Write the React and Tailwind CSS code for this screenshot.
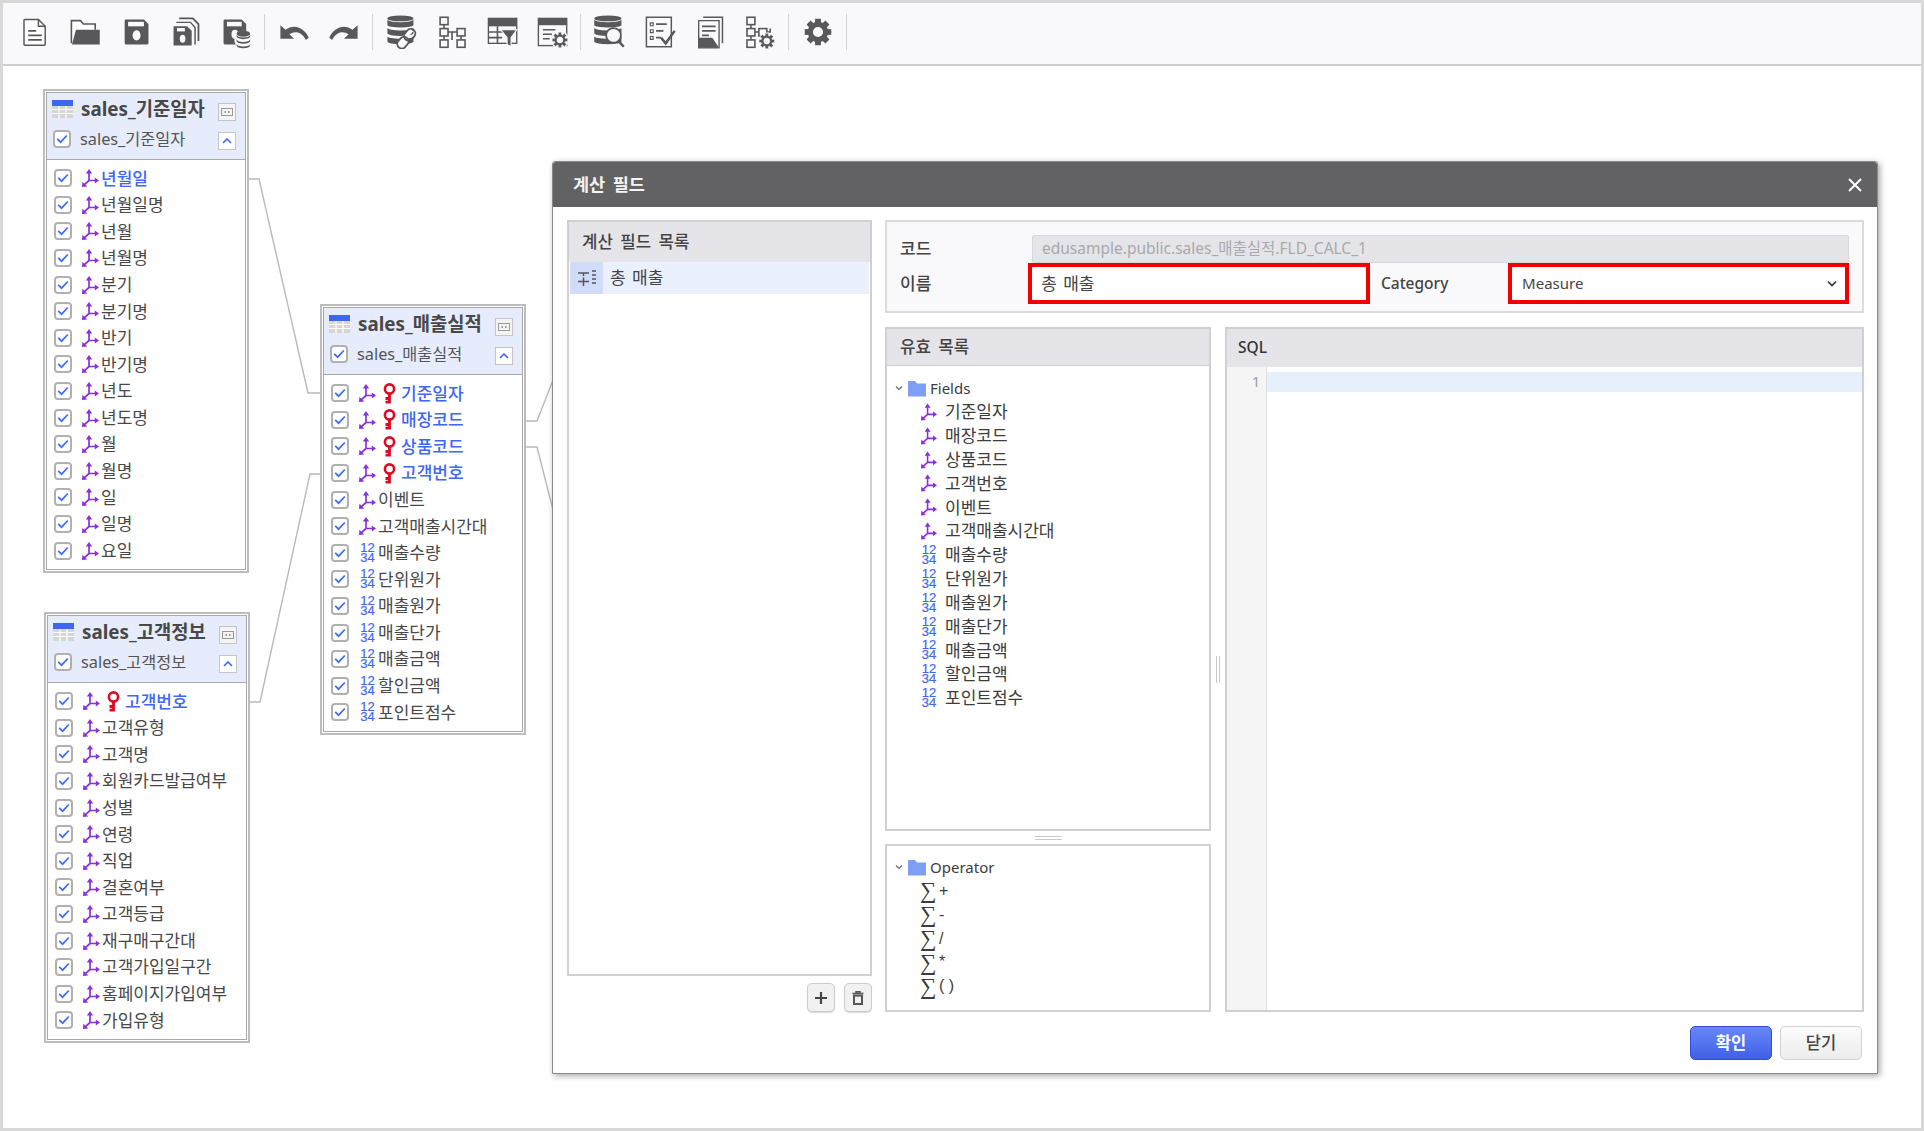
import React from "react";

const FONT = { fontFamily: '"Noto Sans","Noto Sans CJK KR",sans-serif' };

function gearPath(cx, cy, ro, ri, hole, n = 8) {
  let d = "";
  const step = (Math.PI * 2) / n;
  for (let i = 0; i < n; i++) {
    const a = i * step - Math.PI / 2;
    const pts = [
      [a - step * 0.27, ro],
      [a + step * 0.27, ro],
      [a + step * 0.38, ri],
      [a + step * 0.62, ri],
    ];
    pts.forEach(([t, r], j) => {
      d += (i === 0 && j === 0 ? "M" : "L") + (cx + r * Math.cos(t)).toFixed(2) + " " + (cy + r * Math.sin(t)).toFixed(2) + " ";
    });
  }
  d += "Z M" + (cx + hole) + " " + cy + " A" + hole + " " + hole + " 0 1 0 " + (cx - hole) + " " + cy + " A" + hole + " " + hole + " 0 1 0 " + (cx + hole) + " " + cy + " Z";
  return d;
}

const C = "#58585a";

function Ico({ children }) {
  return (
    <svg width="34" height="34" viewBox="0 0 30 30" fill="none">
      {children}
    </svg>
  );
}
const Gear = ({ x, y, r = 6 }) => (
  <path d={gearPath(x, y, r, r * 0.72, r * 0.38)} fill={C} fillRule="evenodd" stroke="#f9f9fb" strokeWidth="0.5" />
);
const Floppy = ({ x = 7, w = 17 }) => (
  <>
    <path d={`M${x + 1} 4 H${x + w - 4} L${x + w} 8 V25 a1 1 0 0 1 -1 1 H${x + 1} a1 1 0 0 1 -1 -1 V5 a1 1 0 0 1 1 -1 Z`} fill={C} />
    <rect x={x + 3} y="6" width={w - 7} height="4" fill="#f9f9fb" />
  </>
);
const Db = ({ x, y, w, h, bands = 3 }) => {
  const s = h / bands;
  return (
    <>
      {Array.from({ length: bands }).map((_, i) => (
        <path
          key={i}
          d={`M${x} ${y + i * s + 2} a${w / 2} 2.4 0 0 0 ${w} 0 v${s - 2.6} a${w / 2} 2.4 0 0 1 -${w} 0 Z`}
          fill={C}
        />
      ))}
      <ellipse cx={x + w / 2} cy={y + 1} rx={w / 2} ry="2.6" fill={C} />
    </>
  );
};

const UNDO = "M3 9 V21 H15 L11 17 C16 13.5 22 15 25.5 22 L28 20 C24 11 15 7.5 7.5 13 Z";

const toolbar = [
  <Ico>
    <path d="M6 4 H18 L24 10 V26 a.7.7 0 0 1 -.7 .7 H6 a.7.7 0 0 1 -.7 -.7 V4.7 a.7.7 0 0 1 .7 -.7 Z" stroke={C} strokeWidth="1.3" fill="#fff" />
    <path d="M18 4 V10 H24" stroke={C} strokeWidth="1.3" />
    <path d="M9 14 H16 M9 18 H21 M9 22 H21" stroke={C} strokeWidth="1.6" />
  </Ico>,
  <Ico>
    <path d="M3 25 V5 H11 L13.5 8 H24 V13" stroke={C} strokeWidth="1.4" fill="#fff" />
    <path d="M3.5 26 L7 13 H28 V26 Z" fill={C} />
  </Ico>,
  <Ico>
    <Floppy x={5} w={21} />
    <ellipse cx="15.5" cy="18" rx="3.5" ry="4.5" fill="#f9f9fb" />
  </Ico>,
  <Ico>
    <path d="M9 3 H21 L26 8 V23" stroke={C} strokeWidth="1.6" fill="none" />
    <path d="M6.5 6.5 H19 L23 11 V26" stroke={C} strokeWidth="1.3" fill="none" />
    <path d="M4 10 H16 L20 14 V27 H4 Z" fill={C} />
    <rect x="7" y="11.5" width="7" height="3" fill="#f9f9fb" />
    <ellipse cx="12" cy="21" rx="2.5" ry="3.5" fill="#f9f9fb" />
  </Ico>,
  <Ico>
    <Floppy x={4} w={20} />
    <ellipse cx="14" cy="17" rx="3" ry="4" fill="#f9f9fb" />
    <circle cx="21.5" cy="22" r="8" fill="#f9f9fb" />
    <Db x={15.5} y={15.5} w={12} h={12} />
  </Ico>,
  <Ico>
    <path d={UNDO} fill={C} />
  </Ico>,
  <Ico>
    <path d={UNDO} fill={C} transform="translate(30 0) scale(-1 1)" />
  </Ico>,
  <Ico>
    <Db x={3} y={2} w={23} h={22} bands={3} />
    <g stroke="#f9f9fb" strokeWidth="4.5" fill="none"><path d="M15 24 L24 13" /></g>
    <rect x="13" y="19" width="8" height="11" rx="4" transform="rotate(40 17 24)" stroke={C} strokeWidth="1.6" fill="#f9f9fb" />
    <rect x="19" y="12" width="8" height="11" rx="4" transform="rotate(40 23 17)" stroke={C} strokeWidth="1.6" fill="none" />
  </Ico>,
  <Ico>
    <g stroke={C} strokeWidth="1.4" fill="#f9f9fb">
      <path d="M8 8 V22 M8 15 H23 M15 15 V22 M23 15 V22" fill="none" />
      <rect x="4.5" y="2" width="7" height="6.5" />
      <rect x="4.5" y="12" width="7" height="6.5" />
      <rect x="19.5" y="12" width="7" height="6.5" />
      <rect x="4.5" y="22" width="7" height="6.5" />
      <rect x="19.5" y="22" width="7" height="6.5" />
    </g>
  </Ico>,
  <Ico>
    <rect x="3" y="3" width="25" height="22" fill="#f9f9fb" stroke={C} strokeWidth="1.2" />
    <rect x="3" y="3" width="25" height="7" fill={C} />
    <path d="M3 15 H19 M3 20 H15 M11 10 V25" stroke={C} strokeWidth="1.4" />
    <path d="M14 13 H28 L23 20 V28 L19.5 26 V20 Z" fill={C} stroke="#f9f9fb" strokeWidth="1" />
  </Ico>,
  <Ico>
    <rect x="3" y="3" width="25" height="24" fill="#f9f9fb" stroke={C} strokeWidth="1.2" />
    <rect x="3" y="3" width="25" height="6" fill={C} />
    <path d="M7 13 H18 M7 17 H15 M7 21 H13" stroke={C} strokeWidth="1.4" />
    <circle cx="22" cy="22" r="8" fill="#f9f9fb" />
    <Gear x={22} y={22} r={7} />
  </Ico>,
  <Ico>
    <Db x={2} y={2} w={24} h={22} />
    <circle cx="19" cy="18" r="6.5" fill="#f9f9fb" stroke={C} strokeWidth="1.6" />
    <path d="M23.5 23 L28 28" stroke={C} strokeWidth="2.2" />
  </Ico>,
  <Ico>
    <rect x="3" y="2" width="22" height="26" fill="#f9f9fb" stroke={C} strokeWidth="1.3" />
    <path d="M6.5 7 H9 V9.5 H6.5 Z M6.5 13 H9 V15.5 H6.5 Z M6.5 19 H9 V21.5 H6.5 Z" stroke={C} strokeWidth="1" />
    <path d="M11.5 8 H21 M11.5 14 H18 M11.5 20 H16" stroke={C} strokeWidth="1.5" />
    <path d="M16 20 L20 25 L28 14" stroke={C} strokeWidth="2.2" fill="none" />
  </Ico>,
  <Ico>
    <path d="M9 2 H26 V25" stroke={C} strokeWidth="1.3" fill="none" />
    <path d="M5 5 H23 V29 H5 Z" fill="#f9f9fb" stroke={C} strokeWidth="1.2" />
    <path d="M8 10 H20 M8 14 H20 M8 18 H14" stroke={C} strokeWidth="1.4" />
    <path d="M5 20 H17 L23 29 H5 Z" fill={C} />
  </Ico>,
  <Ico>
    <g stroke={C} strokeWidth="1.4" fill="#f9f9fb">
      <path d="M7 8 V22 M7 15 H24 V12" fill="none" />
      <rect x="3.5" y="2" width="7" height="6.5" />
      <rect x="3.5" y="12" width="7" height="6.5" />
      <rect x="14" y="12" width="7" height="6.5" />
      <rect x="3.5" y="22" width="7" height="6.5" />
    </g>
    <circle cx="21" cy="23" r="7.5" fill="#f9f9fb" />
    <Gear x={21} y={23} r={7} />
  </Ico>,
  <Ico>
    <path d={gearPath(15, 15, 12, 9, 4.5)} fill={C} fillRule="evenodd" />
  </Ico>,
];

const Sep = () => <div className="w-px h-[36px] bg-[#d4d4d6] mx-[3px]" />;

function Toolbar() {
  const groups = [
    [0, 5],
    [5, 7],
    [7, 11],
    [11, 15],
    [15, 16],
  ];
  return (
    <div className="flex items-center h-[63px] bg-[#f9f9fb] border-b-2 border-[#cfcfcf] pl-[7px] pb-[4px] shrink-0">
      {groups.map(([a, b], i) => (
        <React.Fragment key={i}>
          {toolbar.slice(a, b).map((ic, j) => (
            <div key={j} className="w-[50.3px] h-[36px] flex items-center justify-center">
              {ic}
            </div>
          ))}
          <Sep />
        </React.Fragment>
      ))}
    </div>
  );
}

const Dim = ({ className = "" }) => (
  <svg width="17" height="18" viewBox="0 0 17 18" fill="none" className={className}>
    <path d="M7 3 V11.5 H13.5 M7 11.5 L2.2 15.8" stroke="#8a2fe0" strokeWidth="1.7" />
    <path d="M7 0 L10.2 4.4 H3.8 Z M17 11.5 L12.8 8.4 V14.6 Z M0 18 L0.4 12.8 L5.2 17.4 Z" fill="#8a2fe0" />
  </svg>
);
const Num = () => (
  <span
    className="block w-[16px] text-center text-[#3f66f5] text-[13px] leading-[10px] whitespace-pre [-webkit-text-stroke:0.2px_#3f66f5]"
    style={{ fontFamily: '"Liberation Sans",sans-serif' }}
  >
    {"12\n34"}
  </span>
);
const Key = () => (
  <svg width="13" height="21" viewBox="0 0 13 21" fill="none" className="shrink-0">
    <circle cx="6.5" cy="6" r="4.6" stroke="#dc0a24" strokeWidth="2.6" />
    <path d="M6.5 10 V20.5 M6.5 15.5 H2.5 M6.5 19.2 H2.5" stroke="#dc0a24" strokeWidth="2.8" />
  </svg>
);
const Check = () => (
  <span className="w-[18px] h-[18px] shrink-0 rounded-[4px] border-2 border-[#b0b0b0] bg-white flex items-center justify-center">
    <svg width="12" height="10" viewBox="0 0 12 10" fill="none">
      <path d="M1.2 4.8 L4.6 8.2 L10.8 1.5" stroke="#3f6cf2" strokeWidth="1.7" />
    </svg>
  </span>
);
const TableIcon = () => (
  <svg width="21" height="18" viewBox="0 0 21 18" className="shrink-0">
    <rect x="0" y="0" width="21" height="18" fill="#d6d6d6" />
    <rect x="0" y="0" width="21" height="6" fill="#3f66f0" />
    <path d="M0 9.5 H21 M0 13.5 H21 M7 6 V18 M14 6 V18" stroke="#fff" strokeWidth="1.2" />
  </svg>
);

function Row({ label, keyed, num, blue }) {
  return (
    <div className="flex items-center h-[26.6px] pl-[6px] text-[17px] text-[#484848] whitespace-nowrap">
      <Check />
      <span className="ml-[10px] w-[17px] flex justify-center shrink-0">{num ? <Num /> : <Dim />}</span>
      {keyed ? (
        <>
          <span className="ml-[7px] mr-[3px]">
            <Key />
          </span>
          <span className="ml-[2px] text-[#3f66f5] font-medium">{label}</span>
        </>
      ) : (
        <span className={blue ? "ml-[2px] text-[#3f66f5] font-medium" : "ml-[2px]"}>{label}</span>
      )}
    </div>
  );
}

function Card({ name, rows, className }) {
  return (
    <div className={`absolute w-[206px] bg-white border-2 border-[#bdbdbd] p-[1px] ${className}`}>
      <div className="border border-[#a9a9a9]">
        <div className="h-[67px] bg-[#e6ecfb] border-b border-[#a9a9a9] pl-[5px] pr-[9px] pt-[4px]">
          <div className="flex items-center h-[24px]">
            <TableIcon />
            <span className="ml-[8px] flex-1 font-bold text-[18.8px] text-[#484848] whitespace-nowrap">{name}</span>
            <span className="mt-[5px] w-[18px] h-[18px] border border-[#c4c4c4] bg-[#f4f4f4] flex items-center justify-center">
              <svg width="12" height="8" viewBox="0 0 12 8" fill="none">
                <rect x="0.5" y="0.5" width="11" height="7" stroke="#999" />
                <path d="M3.5 4 H5 M7 4 H8.5" stroke="#777" strokeWidth="1.4" />
              </svg>
            </span>
          </div>
          <div className="flex items-center h-[24px] mt-[6px] text-[16.3px] text-[#555]">
            <span className="ml-[1px]">
              <Check />
            </span>
            <span className="ml-[9px] flex-1 whitespace-nowrap">{name}</span>
            <span className="mt-[4px] w-[18px] h-[18px] border border-[#c4c4c4] bg-white flex items-center justify-center">
              <svg width="10" height="6" viewBox="0 0 10 6" fill="none">
                <path d="M1 5 L5 1 L9 5" stroke="#3f66f5" strokeWidth="1.6" />
              </svg>
            </span>
          </div>
        </div>
        <div className="pt-[5px] pb-[5px] pl-[1px]">
          {rows.map((r) => (
            <Row key={r.label} {...r} />
          ))}
        </div>
      </div>
    </div>
  );
}

const d = (arr) => arr.map((label) => ({ label }));
const n = (arr) => arr.map((label) => ({ label, num: true }));
const k = (arr) => arr.map((label) => ({ label, keyed: true }));

const rows1 = [
  { label: "년월일", blue: true },
  ...d(["년월일명", "년월", "년월명", "분기", "분기명", "반기", "반기명", "년도", "년도명", "월", "월명", "일", "일명", "요일"]),
];
const salesRows = [
  ...k(["기준일자", "매장코드", "상품코드", "고객번호"]),
  ...d(["이벤트", "고객매출시간대"]),
  ...n(["매출수량", "단위원가", "매출원가", "매출단가", "매출금액", "할인금액", "포인트점수"]),
];
const customerRows = [
  ...k(["고객번호"]),
  ...d(["고객유형", "고객명", "회원카드발급여부", "성별", "연령", "직업", "결혼여부", "고객등급", "재구매구간대", "고객가입일구간", "홈페이지가입여부", "가입유형"]),
];

const Folder = () => (
  <svg width="18" height="17" viewBox="0 0 18 17" className="shrink-0">
    <path d="M0 1 H7 L9 3.5 H18 V16.5 H0 Z" fill="#7f9ff5" />
  </svg>
);
const Chevron = () => (
  <svg width="8" height="6" viewBox="0 0 8 6" fill="none" className="shrink-0">
    <path d="M1 1.5 L4 4.5 L7 1.5" stroke="#666" strokeWidth="1.2" />
  </svg>
);

function TreeHead({ label }) {
  return (
    <div className="flex items-center h-[24px] text-[15px] text-[#3c3c3c]">
      <Chevron />
      <span className="ml-[5px]">
        <Folder />
      </span>
      <span className="ml-[4px]">{label}</span>
    </div>
  );
}

function FieldItem({ label, num }) {
  return (
    <div className="flex items-center h-[23.85px] pl-[26px] text-[17px] text-[#3c3c3c]">
      <span className="w-[16px] flex justify-center shrink-0">{num ? <Num /> : <Dim />}</span>
      <span className="ml-[8px]">{label}</span>
    </div>
  );
}

function Dialog() {
  return (
    <div className="absolute left-[549px] top-[95px] w-[1326px] h-[913px] bg-white border border-[#8a8a8a] rounded-t-[3px] shadow-[2px_2px_6px_rgba(0,0,0,0.35)] flex flex-col">
      <div className="h-[45px] shrink-0 bg-[#626264] flex items-center justify-between pl-[20px] pr-[14px] rounded-t-[3px]">
        <span className="text-[17.5px] font-bold text-[#f4f4f4] [word-spacing:3px]">계산 필드</span>
        <svg width="16" height="16" viewBox="0 0 16 16" fill="none">
          <path d="M2 2 L14 14 M14 2 L2 14" stroke="#fff" strokeWidth="1.9" />
        </svg>
      </div>
      <div className="flex-1 flex gap-[13px] pt-[13px] pl-[14px] pr-[13px] min-h-0">
        <div className="w-[305px] shrink-0 flex flex-col">
          <div className="h-[756px] border-2 border-[#d0d0d0] bg-white flex flex-col">
            <div className="h-[40px] bg-[#e5e5e9] flex items-center pl-[13px] text-[16.8px] font-medium text-[#444] [word-spacing:3px]">
              계산 필드 목록
            </div>
            <div className="h-[32px] flex items-center bg-[#eaf0fd] text-[17px] text-[#444] mx-[1px]">
              <span className="w-[33px] h-full bg-[#d0dcfa] flex items-center justify-center">
                <svg width="20" height="18" viewBox="0 0 20 18" fill="none" stroke="#555" strokeWidth="1.5">
                  <path d="M1 4 H12 M6.5 4 V7 M1 12.5 H12 M6.5 8.5 V17 M15 2 H19 M15 6 H19 M15 10 H19 M15 14 H19" />
                </svg>
              </span>
              <span className="ml-[7px] [word-spacing:2px]">총 매출</span>
            </div>
          </div>
          <div className="flex justify-end gap-[9px] mt-[7px]">
            <button className="w-[28px] h-[29px] rounded-[5px] border border-[#ccc] bg-[#f1f1f1] flex items-center justify-center shadow-[0_1px_1px_rgba(0,0,0,0.15)]">
              <svg width="14" height="14" viewBox="0 0 14 14" fill="none">
                <path d="M7 1 V13 M1 7 H13" stroke="#444" strokeWidth="2.2" />
              </svg>
            </button>
            <button className="w-[28px] h-[29px] rounded-[5px] border border-[#ccc] bg-[#f1f1f1] flex items-center justify-center shadow-[0_1px_1px_rgba(0,0,0,0.15)]">
              <svg width="12" height="14" viewBox="0 0 12 14" fill="none">
                <path d="M0.5 2.6 H11.5 M4 2 V0.8 H8 V2" stroke="#555" strokeWidth="1.5" />
                <rect x="2" y="4.6" width="8" height="8.4" stroke="#555" strokeWidth="2" />
              </svg>
            </button>
          </div>
        </div>
        <div className="flex-1 min-w-0 flex flex-col">
          <div className="h-[93px] border-2 border-[#dcdcdc] bg-[#f9f9fb] pt-[13px] pl-[13px] pr-[13px] shrink-0">
            <div className="flex items-center">
              <span className="w-[132px] text-[17px] font-medium text-[#444]">코드</span>
              <div className="flex-1 h-[28px] bg-[#e5e5e9] border border-[#d8d8dc] rounded-[2px] flex items-center pl-[9px] text-[15.5px] text-[#a9a9ac]">
                edusample.public.sales_매출실적.FLD_CALC_1
              </div>
            </div>
            <div className="flex items-center">
              <span className="w-[129px] text-[17px] font-medium text-[#444]">이름</span>
              <div className="w-[344px] h-[41px] border-4 border-[#f00000] bg-white flex items-center pl-[9px] text-[17px] text-[#444] [word-spacing:2px]">
                총 매출
              </div>
              <span className="ml-[11px] w-[128px] text-[15.5px] font-medium text-[#444]">Category</span>
              <div className="w-[343px] h-[41px] border-4 border-[#f00000] bg-white flex items-center justify-between pl-[10px] pr-[8px] text-[15px] text-[#444]">
                <span>Measure</span>
                <svg width="10" height="7" viewBox="0 0 10 7" fill="none">
                  <path d="M1 1.5 L5 5.5 L9 1.5" stroke="#333" strokeWidth="1.7" />
                </svg>
              </div>
            </div>
          </div>
          <div className="flex mt-[14px] h-[685px]">
            <div className="w-[326px] shrink-0 flex flex-col">
              <div className="h-[504px] border-2 border-[#d0d0d0] bg-white">
                <div className="h-[37px] bg-[#e5e5e9] flex items-center pl-[13px] text-[16.8px] font-medium text-[#444] border-b border-[#d0d0d0] [word-spacing:3px]">
                  유효 목록
                </div>
                <div className="pt-[10px] pl-[8px]">
                  <TreeHead label="Fields" />
                  {d(["기준일자", "매장코드", "상품코드", "고객번호", "이벤트", "고객매출시간대"]).map((r) => (
                    <FieldItem key={r.label} {...r} />
                  ))}
                  {n(["매출수량", "단위원가", "매출원가", "매출단가", "매출금액", "할인금액", "포인트점수"]).map((r) => (
                    <FieldItem key={r.label} {...r} />
                  ))}
                </div>
              </div>
              <div className="h-[13px] flex items-center justify-center shrink-0">
                <span className="w-[27px] h-[4px] border-y border-[#c8c8c8]" />
              </div>
              <div className="flex-1 border-2 border-[#d0d0d0] bg-white pt-[9px] pl-[8px]">
                <TreeHead label="Operator" />
                {["+", "-", "/", "*", "( )"].map((o) => (
                  <div key={o} className="flex items-center h-[23.8px] pl-[25px] text-[16px] text-[#3c3c3c]">
                    <span className="w-[19px] text-[23px] leading-none font-light" style={{ fontFamily: '"Liberation Serif",serif' }}>
                      ∑
                    </span>
                    <span style={{ fontFamily: '"Liberation Sans",sans-serif' }}>{o}</span>
                  </div>
                ))}
              </div>
            </div>
            <div className="w-[14px] shrink-0 flex items-center justify-center">
              <span className="w-[4px] h-[27px] border-x border-[#c8c8c8] mt-[-1px]" />
            </div>
            <div className="flex-1 border-2 border-[#d0d0d0] bg-white flex flex-col min-w-0">
              <div className="h-[38px] shrink-0 bg-[#e5e5e9] flex items-center pl-[11px] text-[15.5px] font-medium text-[#333]">SQL</div>
              <div className="flex-1 flex min-h-0">
                <div className="w-[40px] shrink-0 bg-[#f5f5f5] border-r border-[#e0e0e0] pt-[5px] pr-[6px] text-right text-[14px] leading-[20px] text-[#999]">
                  1
                </div>
                <div className="flex-1 pt-[5px]">
                  <div className="h-[20px] bg-[#e6f0fb]" />
                </div>
              </div>
            </div>
          </div>
          <div className="flex justify-end gap-[8px] mt-[14px] pr-[2px]">
            <button className="w-[82px] h-[34px] rounded-[5px] border border-[#2f4fd0] bg-gradient-to-b from-[#6a86fb] to-[#3f60e6] text-[16.5px] font-bold text-white">
              확인
            </button>
            <button className="w-[82px] h-[34px] rounded-[5px] border border-[#d2d2d2] bg-gradient-to-b from-[#fbfbfb] to-[#ececec] text-[16.5px] font-medium text-[#444]">
              닫기
            </button>
          </div>
        </div>
      </div>
    </div>
  );
}

export default function App() {
  return (
    <div className="w-[1924px] h-[1131px] bg-white border-[3px] border-[#d8d8d8] flex flex-col overflow-hidden" style={FONT}>
      <Toolbar />
      <div className="relative flex-1">
        <svg className="absolute inset-0" width="1918" height="1061" viewBox="3 66 1918 1061" fill="none">
          <g stroke="#b9b9b9" strokeWidth="1.4">
            <path d="M248 179 H259 L308 393 H321" />
            <path d="M249 702 H260 L310 474 H321" />
            <path d="M525 421 H537 L553 380" />
            <path d="M525 447 H537 L553 510" />
          </g>
        </svg>
        <Card name="sales_기준일자" rows={rows1} className="left-[40px] top-[23px]" />
        <Card name="sales_매출실적" rows={salesRows} className="left-[317px] top-[238px]" />
        <Card name="sales_고객정보" rows={customerRows} className="left-[41px] top-[546px]" />
        <Dialog />
      </div>
    </div>
  );
}
